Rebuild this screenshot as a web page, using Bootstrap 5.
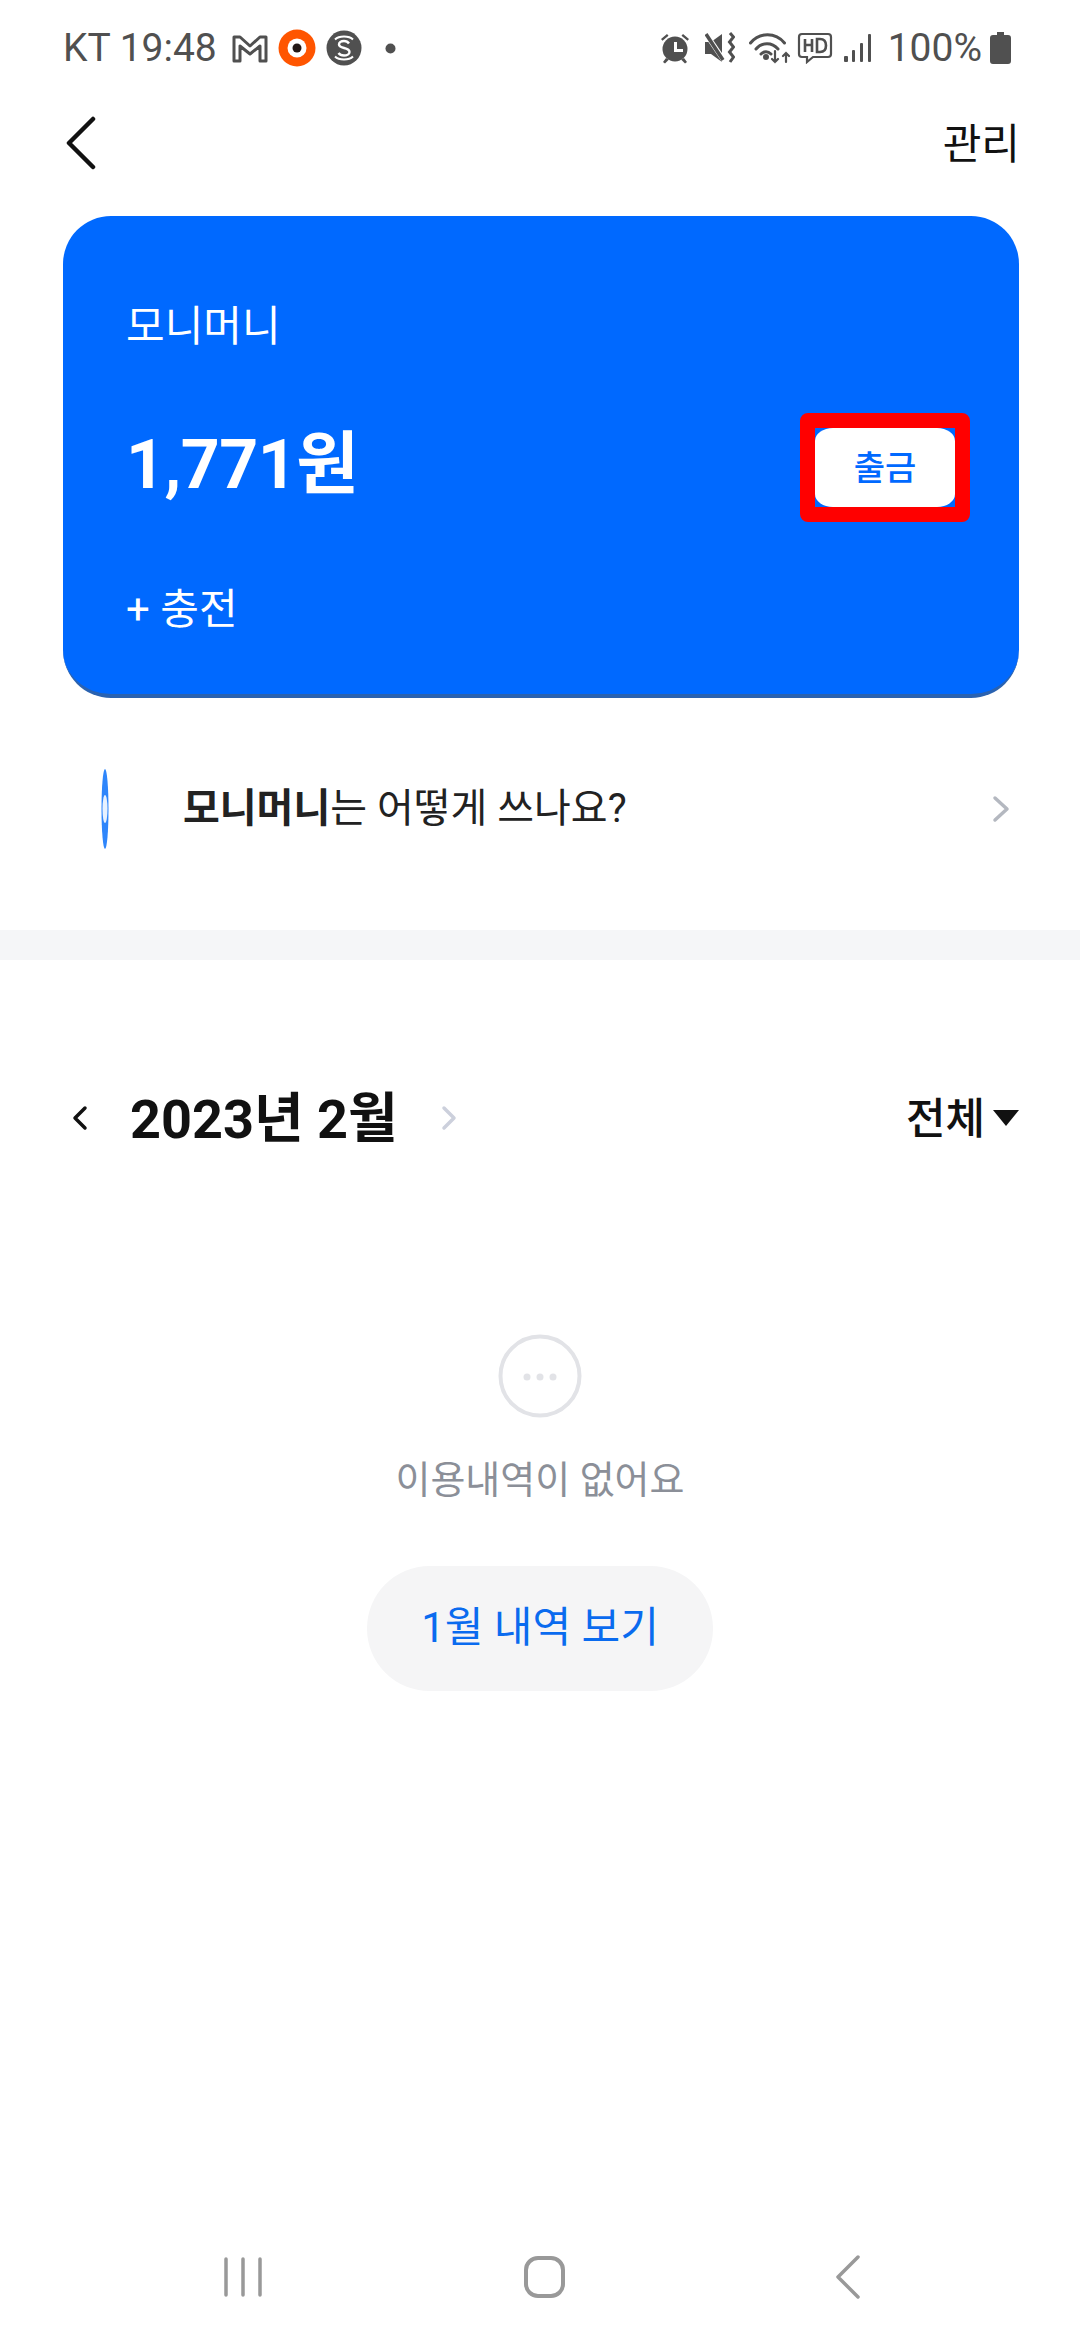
<!DOCTYPE html>
<html lang="ko">
  <head>
    <meta charset="UTF-8" />
    <title>모니머니</title>
    <link
      rel="stylesheet"
      href="https://cdn.jsdelivr.net/npm/bootstrap@5.3.3/dist/css/bootstrap.min.css"
    />
    <style>
      body {
        width: 1080px;
        height: 2340px;
        overflow: hidden;
        background: #fff;
        color: #111;
        font-family: Roboto, "Noto Sans CJK KR", sans-serif;
      }
      .phone {
        height: 2340px;
      }
      .status-row {
        height: 96px;
        padding: 0 69px 0 63px;
        color: #505050;
        font-size: 39px;
        line-height: 1;
      }
      .status-row svg {
        display: block;
      }
      .gap-7 {
        margin-left: 7px;
      }
      .gap-8 {
        margin-left: 8px;
      }
      .gap-10 {
        margin-left: 10px;
      }
      .gap-11 {
        margin-left: 11px;
      }
      .gap-14 {
        margin-left: 14px;
      }
      .gap-15 {
        margin-left: 15px;
      }
      .gap-16 {
        margin-left: 16px;
      }
      .gap-23 {
        margin-left: 23px;
      }
      .top-row {
        height: 94px;
        margin-bottom: 26px;
        padding: 0 60px 0 66px;
        font-size: 42px;
        line-height: 1;
      }
      .top-action {
        padding-top: 3px;
      }
      .money-card {
        height: 482px;
        margin: 0 61px 0 63px;
        padding: 0 49px 0 63px;
        background: #0069ff;
        border-bottom: 4px solid #2a62b0;
        border-radius: 48px;
        color: #fff;
      }
      .card-name,
      .card-charge {
        font-size: 42px;
        line-height: 1;
      }
      .card-name {
        padding-top: 90px;
      }
      .card-amount {
        padding-bottom: 5px;
        font-size: 68px;
        font-weight: 700;
        letter-spacing: -0.5px;
        line-height: 1;
      }
      .card-mid {
        margin-top: 65px;
      }
      .card-charge {
        margin-top: 67px;
      }
      .red-frame {
        width: 170px;
        height: 109px;
        border: 15px solid #f00;
        border-radius: 8px;
        background: #0069ff;
      }
      .red-frame button {
        width: 100%;
        height: 100%;
        padding: 0;
        border: 0;
        border-radius: 18px / 13px;
        background: #fff;
        color: #0069ff;
        font-size: 34px;
        font-weight: 500;
        line-height: 1;
      }
      .help-row {
        height: 232px;
        padding: 0 70px 11px 0;
        font-size: 40px;
        color: #222;
      }
      .help-icon {
        width: 183px;
        padding-left: 101px;
      }
      .band {
        height: 30px;
        background: #f5f6f8;
      }
      .month-row {
        height: 72px;
        margin-top: 122px;
        padding: 0 61px 0 72px;
      }
      .month-label {
        margin: 0 43px 0 42px;
        padding-top: 3px;
        font-size: 54px;
        font-weight: 700;
        line-height: 1;
      }
      .filter-label {
        padding-top: 3px;
        font-size: 43px;
        font-weight: 500;
        line-height: 1;
      }
      .empty-box {
        margin-top: 180px;
      }
      .empty-text {
        margin-top: 40px;
        color: #8b8f98;
        font-size: 38px;
        line-height: 1.2;
      }
      .month-pill {
        width: 346px;
        height: 125px;
        margin-top: 62px;
        padding: 0;
        border: 0;
        border-radius: 63px;
        background: #f5f5f6;
        color: #0a6bef;
        font-size: 42px;
        line-height: 1;
      }
      .soft-keys {
        margin-top: auto;
        height: 126px;
        padding-left: 224px;
      }
      .key-home {
        margin-left: 262px;
      }
      .key-back {
        margin-left: 271px;
      }
    </style>
  </head>
  <body>
    <div class="phone d-flex flex-column">
      <div class="status-row d-flex align-items-center justify-content-between">
        <div class="d-flex align-items-center">
          <span>KT 19:48</span>
          <svg class="gap-15" width="36" height="30" viewBox="0 0 36 30" fill="none" stroke="#505050" stroke-width="3" stroke-linejoin="round">
            <path d="M2 4h6l10 9 10-9h6v24h-6V13l-10 8-10-8v15H2z" />
          </svg>
          <svg class="gap-10" width="38" height="38" viewBox="0 0 38 38">
            <circle cx="19" cy="19" r="18.500" fill="#ff5500" />
            <circle cx="19" cy="19" r="9.500" fill="#fff" />
            <circle cx="19" cy="19" r="4.500" fill="#231815" />
          </svg>
          <svg class="gap-10" width="36" height="36" viewBox="0 0 36 36" fill="none">
            <circle cx="18" cy="18" r="17.500" fill="#505050" />
            <path d="M23 13.500c-1-1.500-3-2.500-5-2.500-3 0-5 1.500-5 3.500 0 4.500 10.500 2.500 10.500 7.500 0 2-2.500 3.500-5.500 3.500-2.500 0-4.500-1-5.500-2.500" stroke="#fff" stroke-width="2.400" />
            <path d="M9 9.500c4-4 14-4 18 0M9 26.500c4 4 14 4 18 0" stroke="#fff" stroke-width="2" />
          </svg>
          <svg class="gap-23" width="11" height="11" viewBox="0 0 11 11">
            <circle cx="5.500" cy="5.500" r="5" fill="#505050" />
          </svg>
        </div>
        <div class="d-flex align-items-center">
          <svg width="30" height="32" viewBox="0 0 30 32" fill="#505050">
            <circle cx="15" cy="17" r="12.500" />
            <path d="M1 7l6-5 1.500 1.800-6 5zM29 7l-6-5-1.500 1.800 6 5z" />
            <path d="M6 26l-3 4 2 1.500 4-4zM24 26l3 4-2 1.500-4-4z" />
            <path d="M14 10h3v7h6v3h-9z" fill="#fff" />
          </svg>
          <svg class="gap-15" width="30" height="32" viewBox="0 0 30 32">
            <path d="M0 10h6l11-8v28L6 22H0z" fill="#505050" />
            <path d="M1 2l19 28" stroke="#fff" stroke-width="5" />
            <path d="M1 2l17 26" stroke="#505050" stroke-width="3.500" />
            <path d="M25 1l3.500 4-4 5 4 5-4 5 4 5-3.500 5" fill="none" stroke="#505050" stroke-width="3" />
          </svg>
          <svg class="gap-14" width="41" height="32" viewBox="0 0 41 32" fill="none" stroke="#505050" stroke-width="3" stroke-linecap="round">
            <path d="M1.500 11c9-11 25-11 34 0M7 17c6-7 16-7 22 0M12 22c3-3 7-3 10 0" />
            <circle cx="17" cy="25" r="1.500" fill="#505050" />
            <path d="M26 19v11M23 27l3 3 3-3M37 30V21M34 24l3-3 3 3" stroke-width="2.200" />
          </svg>
          <svg class="gap-7" width="36" height="32" viewBox="0 0 36 32" fill="none" stroke="#505050">
            <path d="M5 2h26a3 3 0 0 1 3 3v17a3 3 0 0 1-3 3H16l-6 5v-5H5a3 3 0 0 1-3-3V5a3 3 0 0 1 3-3z" stroke-width="2.200" />
            <path d="M8 7v13M8 13h7M15 7v13M20 7v13h3c4 0 6-2 6-6.500S27 7 23 7z" stroke-width="2.600" />
          </svg>
          <svg class="gap-11" width="28" height="30" viewBox="0 0 28 30" fill="#505050">
            <rect x="0" y="23" width="4" height="6" rx="1" />
            <rect x="8" y="17" width="3" height="12" rx="1" />
            <rect x="16" y="10" width="3" height="19" rx="1" />
            <rect x="24" y="1" width="3" height="28" rx="1" />
          </svg>
          <span class="gap-16">100%</span>
          <svg class="gap-8" width="21" height="32" viewBox="0 0 21 32" fill="#505050">
            <path d="M7 0h7v3h4a3 3 0 0 1 3 3v23a3 3 0 0 1-3 3H3a3 3 0 0 1-3-3V6a3 3 0 0 1 3-3h4z" />
          </svg>
        </div>
      </div>

      <div class="top-row d-flex align-items-center justify-content-between">
        <svg width="30" height="54" viewBox="0 0 30 54" fill="none" stroke="#111" stroke-width="4.500" stroke-linecap="round" stroke-linejoin="round">
          <path d="M27 3L3 27l24 24" />
        </svg>
        <span class="top-action">관리</span>
      </div>

      <div class="money-card">
        <div class="card-name">모니머니</div>
        <div class="card-mid d-flex align-items-center justify-content-between">
          <div class="card-amount">1,771원</div>
          <div class="red-frame">
            <button type="button">출금</button>
          </div>
        </div>
        <div class="card-charge">+ 충전</div>
      </div>

      <div class="help-row d-flex align-items-center">
        <div class="help-icon">
          <svg class="d-block" width="8" height="80" viewBox="0 0 8 80">
            <ellipse cx="4" cy="40" rx="3.500" ry="40" fill="#2f86fb" />
            <ellipse cx="4" cy="40" rx="2.500" ry="14" fill="#e8f2ff" />
          </svg>
        </div>
        <div class="flex-grow-1"><span class="fw-bold">모니머니</span>는 어떻게 쓰나요?</div>
        <svg width="18" height="28" viewBox="0 0 18 28" fill="none" stroke="#b4b8c0" stroke-width="3.500" stroke-linecap="round" stroke-linejoin="round">
          <path d="M3 3l12 11L3 25" />
        </svg>
      </div>

      <div class="band"></div>

      <div class="month-row d-flex align-items-center">
        <svg width="16" height="26" viewBox="0 0 16 26" fill="none" stroke="#111" stroke-width="3.500" stroke-linecap="round" stroke-linejoin="round">
          <path d="M13 3L3 13l10 10" />
        </svg>
        <div class="month-label">2023년 2월</div>
        <svg width="16" height="26" viewBox="0 0 16 26" fill="none" stroke="#ccd0dc" stroke-width="3.500" stroke-linecap="round" stroke-linejoin="round">
          <path d="M3 3l10 10L3 23" />
        </svg>
        <div class="filter-label ms-auto">전체</div>
        <svg class="ms-2" width="26" height="16" viewBox="0 0 26 16">
          <path d="M0 0h26L13 16z" fill="#111" />
        </svg>
      </div>

      <div class="empty-box d-flex flex-column align-items-center">
        <svg width="84" height="84" viewBox="0 0 84 84" fill="none">
          <circle cx="42" cy="42" r="39.500" stroke="#e2e3e7" stroke-width="4" />
          <circle cx="29" cy="43" r="3.500" fill="#e2e3e7" />
          <circle cx="42" cy="43" r="3.500" fill="#e2e3e7" />
          <circle cx="55" cy="43" r="3.500" fill="#e2e3e7" />
        </svg>
        <div class="empty-text">이용내역이 없어요</div>
        <button type="button" class="month-pill">1월 내역 보기</button>
      </div>

      <div class="soft-keys d-flex align-items-center">
        <svg width="38" height="42" viewBox="0 0 38 42" stroke="#999" stroke-width="3.500" stroke-linecap="round">
          <path d="M2 3v36M19 3v36M36 3v36" />
        </svg>
        <svg class="key-home" width="41" height="42" viewBox="0 0 41 42" fill="none" stroke="#999" stroke-width="4">
          <rect x="2" y="2" width="37" height="38" rx="12" />
        </svg>
        <svg class="key-back" width="24" height="44" viewBox="0 0 24 44" fill="none" stroke="#999" stroke-width="3.500" stroke-linecap="round" stroke-linejoin="round">
          <path d="M22 2L2 22l20 20" />
        </svg>
      </div>
    </div>
    <script src="https://cdn.jsdelivr.net/npm/bootstrap@5.3.3/dist/js/bootstrap.bundle.min.js"></script>
  </body>
</html>
